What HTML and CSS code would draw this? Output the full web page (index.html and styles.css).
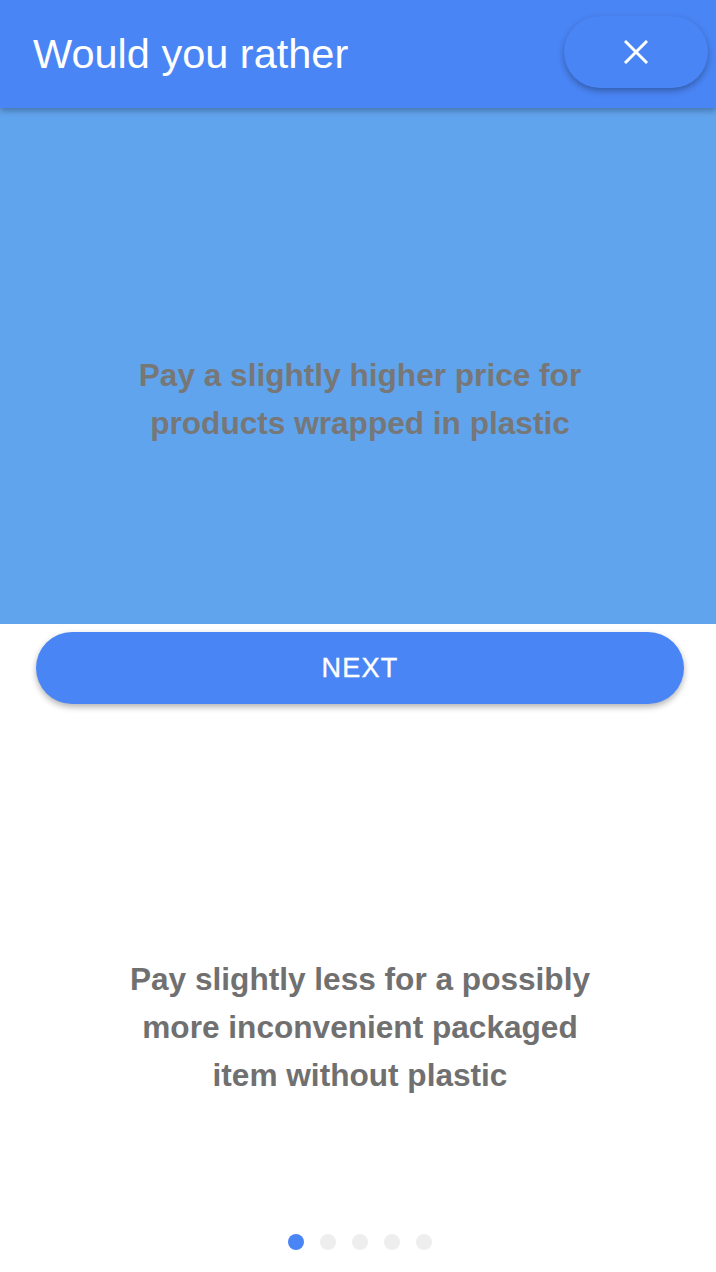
FILE: index.html
```html
<!DOCTYPE html>
<html>
<head>
<meta charset="utf-8">
<link rel="stylesheet" href="styles.css">
</head>
<body>
<div class="screen">
  <header class="topbar">
    <h1 class="title">Would you rather</h1>
    <button class="close" aria-label="Close">
      <svg width="24" height="24" viewBox="0 0 24 24"><path d="M2 2 L22 22 M22 2 L2 22" stroke="#fff" stroke-width="3" stroke-linecap="square" fill="none"/></svg>
    </button>
  </header>
  <section class="option option-a">
    <p class="option-text">Pay a slightly higher price for<br>products wrapped in plastic</p>
  </section>
  <div class="next-wrap">
    <button class="next">NEXT</button>
  </div>
  <section class="option option-b">
    <p class="option-text dark">Pay slightly less for a possibly<br>more inconvenient packaged<br>item without plastic</p>
  </section>
  <nav class="dots">
    <span class="dot active"></span>
    <span class="dot"></span>
    <span class="dot"></span>
    <span class="dot"></span>
    <span class="dot"></span>
  </nav>
</div>
</body>
</html>
```
FILE: styles.css
```css
* { box-sizing: border-box; }
html, body { margin: 0; padding: 0; background: #fff; }
body { font-family: "Liberation Sans", Arial, sans-serif; }
.screen {
  width: 716px;
  height: 1272px;
  display: flex;
  flex-direction: column;
  overflow: hidden;
}
.topbar {
  height: 108px;
  background: #4a85f5;
  display: flex;
  align-items: flex-start;
  justify-content: space-between;
  padding: 0 8px 0 33px;
  position: relative;
  z-index: 2;
  box-shadow: 0 3px 6px rgba(0,0,0,0.28);
  flex: none;
}
.title {
  margin: 0;
  padding-top: 31px;
  font-size: 41.5px;
  line-height: 46px;
  font-weight: normal;
  color: #fff;
}
.close {
  margin-top: 16px;
  width: 144px;
  height: 72px;
  border: none;
  border-radius: 36px;
  background: #4a85f5;
  box-shadow: 0 3px 6px rgba(0,0,0,0.3);
  display: flex;
  align-items: center;
  justify-content: center;
  padding: 0;
}
.close svg { display: block; }
.option-a {
  height: 516px;
  background: #61a4ee;
  padding-top: 243px;
  flex: none;
}
.option-text {
  margin: 0;
  padding-left: 4px;
  text-align: center;
  font-weight: bold;
  font-size: 31.6px;
  line-height: 48px;
  color: #777777;
}
.option-text.dark { color: #707070; }
.next-wrap {
  padding: 8px 32px 0 36px;
  flex: none;
}
.next {
  width: 648px;
  height: 72px;
  border: none;
  border-radius: 36px;
  background: #4a85f5;
  color: #fff;
  font-family: "Liberation Sans", Arial, sans-serif;
  font-size: 27px;
  letter-spacing: 1.2px;
  -webkit-text-stroke: 0.4px #fff;
  box-shadow: 0 3px 6px rgba(0,0,0,0.3);
  display: block;
  padding: 0;
}
.option-b {
  padding-top: 251px;
  height: 530px;
  flex: none;
}
.dots {
  display: flex;
  justify-content: center;
  gap: 16px;
  padding-left: 4px;
}
.dot {
  width: 16px;
  height: 16px;
  border-radius: 50%;
  background: #eeeeee;
}
.dot.active { background: #4a85f5; }
```
